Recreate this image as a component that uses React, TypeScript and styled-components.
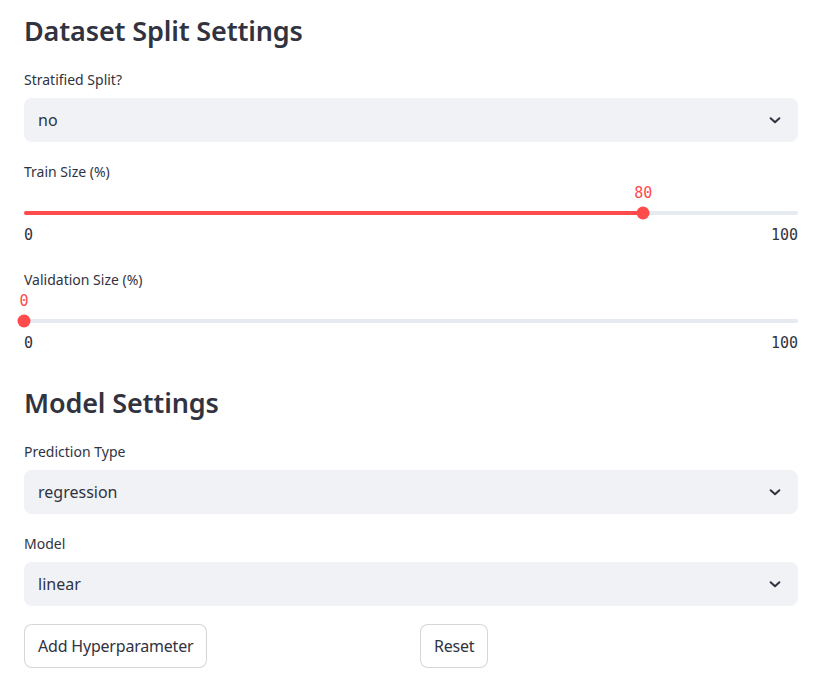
import React from "react";
import styled, { createGlobalStyle } from "styled-components";

const Global = createGlobalStyle`
  html, body { margin: 0; padding: 0; background: #ffffff; }
  body { font-family: "Source Sans Pro", "Noto Sans", sans-serif; color: #31333f; }
  * { box-sizing: border-box; }
`;

const Page = styled.div`
  width: 774px;
  margin-left: 24px;
  display: flex;
  flex-direction: column;
`;

const Heading = styled.h3<{ $top: number }>`
  margin: 0;
  padding-top: ${(p) => p.$top}px;
  font-size: 27px;
  line-height: 34px;
  font-weight: 600;
  color: #31333f;
  letter-spacing: -0.15px;
`;

const Label = styled.div<{ $top: number }>`
  margin-top: ${(p) => p.$top}px;
  font-size: 14px;
  line-height: 20px;
  color: #31333f;
`;

const SelectBox = styled.div`
  margin-top: 8px;
  height: 44px;
  border-radius: 8px;
  background: #f0f2f6;
  display: flex;
  align-items: center;
  justify-content: space-between;
  padding: 0 16px 0 14px;
  font-size: 16px;
  color: #31333f;
`;

const Chevron = () => (
  <svg width="14" height="14" viewBox="0 0 24 24" fill="none">
    <path d="M4.5 9l7.5 7 7.5-7" stroke="#31333f" strokeWidth="3.4" strokeLinecap="round" strokeLinejoin="round" />
  </svg>
);

const SliderWrap = styled.div`
  margin-top: 1px;
  position: relative;
  display: flex;
  flex-direction: column;
`;

const ValueRow = styled.div`
  position: relative;
  height: 20px;
`;

const ValueText = styled.span`
  position: absolute;
  top: 0;
  transform: translateX(-50%);
  font-family: "DejaVu Sans Mono", "Liberation Mono", monospace;
  font-size: 15px;
  line-height: 20px;
  color: #ff4b4b;
`;

const Track = styled.div`
  position: relative;
  margin-top: 8px;
  height: 4px;
  border-radius: 2px;
  background: #e6eaf1;
`;

const Fill = styled.div`
  position: absolute;
  left: 0;
  top: 0;
  height: 4px;
  border-radius: 2px;
  background: #ff4b4b;
`;

const Thumb = styled.div`
  position: absolute;
  top: 50%;
  width: 13px;
  height: 13px;
  border-radius: 50%;
  background: #ff4b4b;
  transform: translate(-50%, -50%);
`;

const TickRow = styled.div`
  margin-top: 10px;
  display: flex;
  justify-content: space-between;
  font-family: "DejaVu Sans Mono", "Liberation Mono", monospace;
  font-size: 15px;
  line-height: 20px;
  color: #31333f;
`;

const ButtonRow = styled.div`
  margin-top: 18px;
  display: grid;
  grid-template-columns: 1fr 1fr;
  column-gap: 18px;
`;

const Button = styled.button`
  justify-self: start;
  height: 44px;
  padding: 0 13px;
  border: 1px solid rgba(49, 51, 63, 0.2);
  border-radius: 8px;
  background: #ffffff;
  font-family: "Source Sans Pro", "Noto Sans", sans-serif;
  font-size: 16px;
  letter-spacing: -0.2px;
  color: #31333f;
`;

function Slider({ label, value, top }: { label: string; value: number; top: number }) {
  const pct = `${value}%`;
  return (
    <>
      <Label $top={top}>{label}</Label>
      <SliderWrap>
        <ValueRow>
          <ValueText style={{ left: pct }}>{value}</ValueText>
        </ValueRow>
        <Track>
          <Fill style={{ width: pct }} />
          <Thumb style={{ left: pct }} />
        </Track>
        <TickRow>
          <span>0</span>
          <span>100</span>
        </TickRow>
      </SliderWrap>
    </>
  );
}

function Select({ label, value, top }: { label: string; value: string; top: number }) {
  return (
    <>
      <Label $top={top}>{label}</Label>
      <SelectBox>
        <span>{value}</span>
        <Chevron />
      </SelectBox>
    </>
  );
}

export default function App() {
  return (
    <>
      <Global />
      <Page>
        <Heading $top={14}>Dataset Split Settings</Heading>
        <Select label="Stratified Split?" value="no" top={22} />
        <Slider label="Train Size (%)" value={80} top={20} />
        <Slider label="Validation Size (%)" value={0} top={25} />
        <Heading $top={33}>Model Settings</Heading>
        <Select label="Prediction Type" value="regression" top={22} />
        <Select label="Model" value="linear" top={20} />
        <ButtonRow>
          <div>
            <Button>Add Hyperparameter</Button>
          </div>
          <div>
            <Button>Reset</Button>
          </div>
        </ButtonRow>
      </Page>
    </>
  );
}
